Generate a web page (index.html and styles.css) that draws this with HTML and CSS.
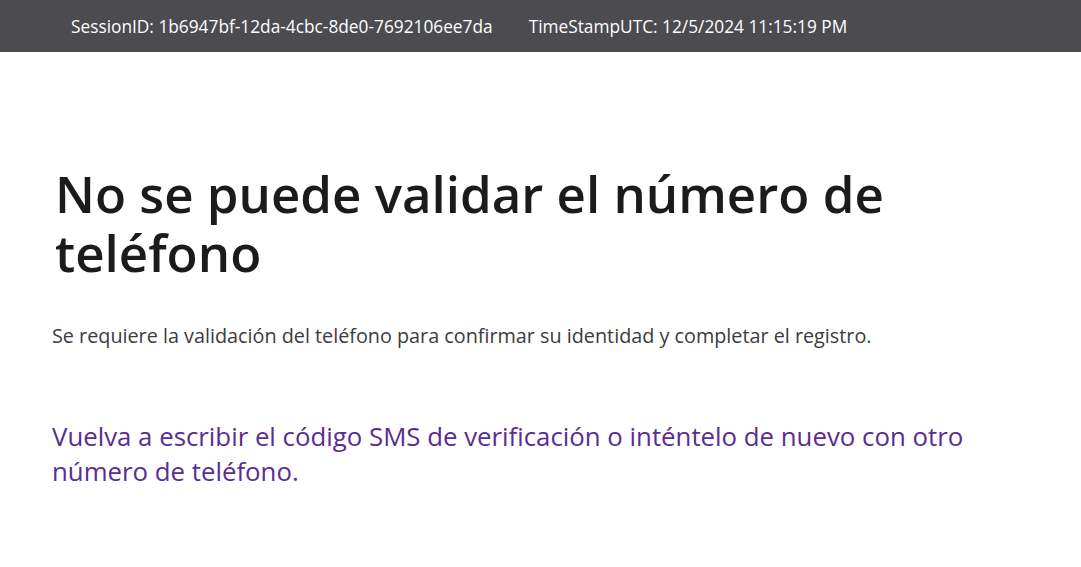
FILE: index.html
```html
<!DOCTYPE html>
<html lang="es">
<head>
  <meta charset="UTF-8">
  <meta name="viewport" content="width=device-width, initial-scale=1.0">
  <title>Error</title>
  <link rel="stylesheet" href="styles.css">
</head>
<body>
  <!-- Session info bar -->
  <div class="session-bar">
    <span>SessionID: 1b6947bf-12da-4cbc-8de0-7692106ee7da</span>
    <span>TimeStampUTC: 12/5/2024 11:15:19 PM</span>
  </div>

  <div class="content">
    <h1>No se puede validar el número de teléfono</h1>
    <p class="desc">Se requiere la validación del teléfono para confirmar su identidad y completar el registro.</p>
    <p class="hint">Vuelva a escribir el código SMS de verificación o inténtelo de nuevo con otro número de teléfono.</p>
  </div>
</body>
</html>
```

FILE: styles.css
```css
body {
  margin: 0;
  padding: 0;
  background-color: #fff;
  font-family: "Open Sans", "Noto Sans", Arial, sans-serif;
}
.session-bar {
  background-color: #4c4b50;
  color: #fff;
  height: 52px;
  display: flex;
  align-items: center;
  gap: 36px;
  padding-left: 71px;
  font-size: 17.3px;
}
.content {
  padding: 112px 0 0 52px;
  max-width: 940px;
}
h1 {
  margin: 0 0 0 3px;
  font-size: 51px;
  font-weight: 600;
  line-height: 59px;
  color: #1b1b1e;
}
.desc {
  margin: 41px 0 0;
  font-size: 19.8px;
  line-height: 26px;
  color: #3b3b40;
}
.hint {
  margin: 70px 0 0;
  font-size: 25.8px;
  line-height: 35px;
  color: #5c2d91;
}
```
